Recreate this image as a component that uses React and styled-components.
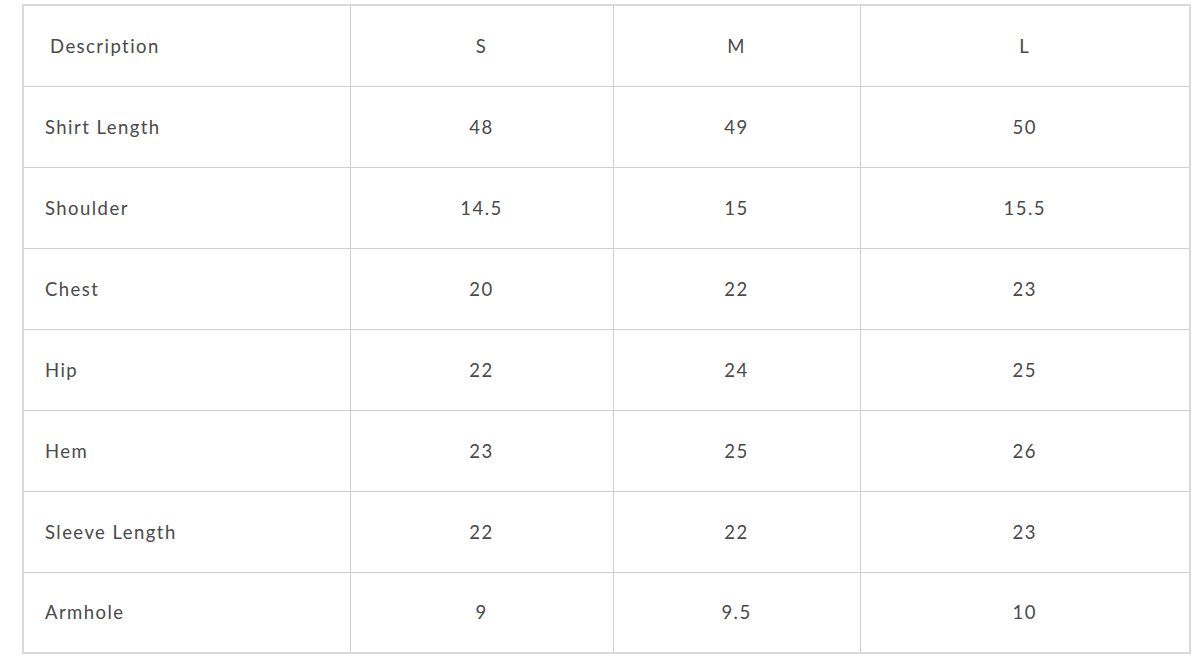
import React from 'react'
import styled, { createGlobalStyle } from 'styled-components'

const GlobalStyle = createGlobalStyle`
  body {
    margin: 0;
    background: #fff;
    font-family: Lato, "Noto Sans", sans-serif;
  }
`

const Page = styled.div`
  padding: 4px 3px 0 22px;
`

const Table = styled.table`
  width: 1167px;
  table-layout: fixed;
  border-collapse: collapse;
  border: 2px solid #dadada;
  color: #4a4a4a;
  font-size: 18.5px;
  letter-spacing: 1.45px;
`

const Row = styled.tr`
  height: ${p => (p.$head ? '81.8px' : '80.9px')};
`

const Cell = styled.td`
  border: 1px solid #cfcfcf;
  padding: 0 ${p => (p.$first ? (p.$head ? '26px' : '21px') : '0')};
  text-align: ${p => (p.$first ? 'left' : 'center')};
  vertical-align: middle;
`

const sizes = ['S', 'M', 'L']

const rows = [
  ['Shirt Length', '48', '49', '50'],
  ['Shoulder', '14.5', '15', '15.5'],
  ['Chest', '20', '22', '23'],
  ['Hip', '22', '24', '25'],
  ['Hem', '23', '25', '26'],
  ['Sleeve Length', '22', '22', '23'],
  ['Armhole', '9', '9.5', '10'],
]

const App = () => {
  return (
    <Page>
      <GlobalStyle />
      <Table>
        <colgroup>
          <col style={{ width: 327 }} />
          <col style={{ width: 263 }} />
          <col style={{ width: 247 }} />
          <col style={{ width: 330 }} />
        </colgroup>
        <tbody>
          <Row $head>
            <Cell $first $head>Description</Cell>
            {sizes.map(s => (
              <Cell key={s}>{s}</Cell>
            ))}
          </Row>
          {rows.map(([label, ...values]) => (
            <Row key={label}>
              <Cell $first>{label}</Cell>
              {values.map((v, i) => (
                <Cell key={i}>{v}</Cell>
              ))}
            </Row>
          ))}
        </tbody>
      </Table>
    </Page>
  )
}

export default App
